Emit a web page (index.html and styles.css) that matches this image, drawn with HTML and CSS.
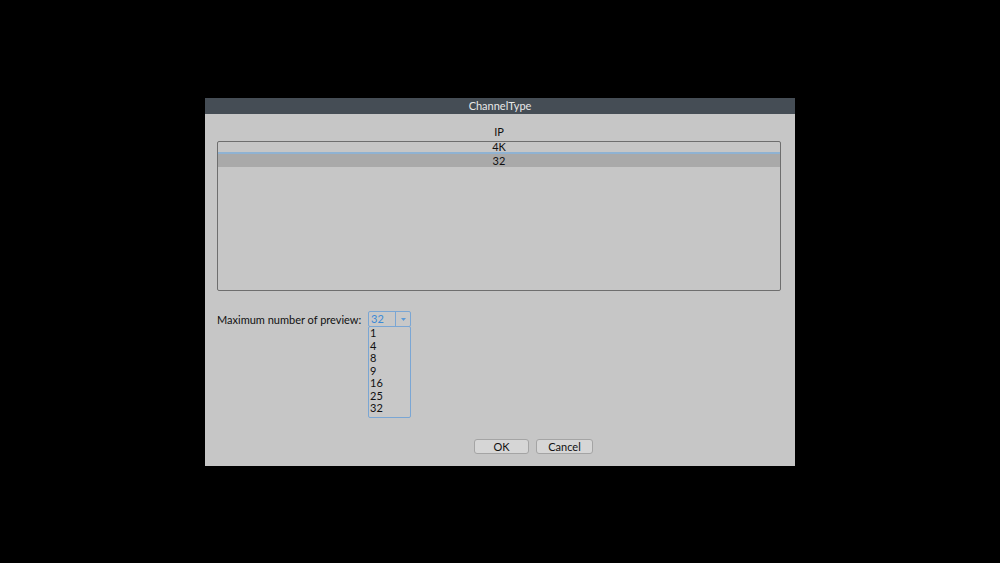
FILE: index.html
```html
<!DOCTYPE html>
<html>
<head>
    <title>ChannelType</title>
    <link rel="stylesheet" href="styles.css">
</head>
<body>
    <div class="dialog">
        <div class="title-bar">ChannelType</div>
        <div class="dialog-body">
            <div class="list-caption">IP</div>
            <div class="listbox">
                <div class="list-row">4K</div>
                <div class="list-row selected">32</div>
            </div>

            <div class="form-row">
                <span class="field-label">Maximum number of preview:</span>
                <div class="combo">
                    <div class="combo-box">
                        <span class="combo-value">32</span>
                        <span class="combo-arrow">
                            <svg width="7" height="5" viewBox="0 0 7 5"><path d="M1 1h5L3.5 4z" fill="#5a9ad8"/></svg>
                        </span>
                    </div>
                    <ul class="combo-list">
                        <li>1</li>
                        <li>4</li>
                        <li>8</li>
                        <li>9</li>
                        <li>16</li>
                        <li>25</li>
                        <li>32</li>
                    </ul>
                </div>
            </div>

            <div class="buttons">
                <button class="btn">OK</button>
                <button class="btn">Cancel</button>
            </div>
        </div>
    </div>
</body>
</html>
```

FILE: styles.css
```css
body {
    margin: 0;
    height: 100vh;
    background-color: #000;
    display: flex;
    justify-content: center;
    align-items: center;
    font-family: Lato, "Noto Sans", sans-serif;
    font-size: 11px;
    color: #111;
}
.dialog {
    width: 590px;
    height: 368px;
    margin-top: 1px;
    background-color: #c6c6c6;
    display: flex;
    flex-direction: column;
}
.title-bar {
    height: 16px;
    line-height: 16px;
    background-color: #454d55;
    color: #e8e8e8;
    text-align: center;
}
.dialog-body {
    flex: 1;
    padding: 0 14px 0 12px;
    display: flex;
    flex-direction: column;
}
.list-caption {
    margin-top: 11px;
    height: 14px;
    line-height: 14px;
    text-align: center;
}
.listbox {
    margin-top: 2px;
    height: 148px;
    border: 1px solid #6e6e6e;
    border-radius: 2px;
}
.list-row {
    height: 12px;
    line-height: 12px;
    text-align: center;
}
.list-row:first-child {
    height: 10px;
    line-height: 10px;
    border-bottom: 2px solid #8fb2d2;
}
.list-row.selected {
    height: 13px;
    line-height: 13px;
    background-color: #a9a9a9;
}
.form-row {
    margin-top: 20px;
    display: flex;
    align-items: center;
    height: 16px;
}
.field-label {
    width: 151px;
}
.combo {
    position: relative;
}
.combo-box {
    width: 41px;
    height: 14px;
    border: 1px solid #7aa6d4;
    border-radius: 2px;
    display: flex;
    background-color: #c8c8c8;
}
.combo-value {
    flex: 1;
    padding-left: 2px;
    line-height: 14px;
    color: #3c8ad6;
}
.combo-arrow {
    width: 14px;
    border-left: 1px solid #7aa6d4;
    display: flex;
    align-items: center;
    justify-content: center;
}
.combo-list {
    position: absolute;
    top: 15px;
    left: 0;
    width: 41px;
    margin: 0;
    padding: 0 0 2px 0;
    list-style: none;
    border: 1px solid #7aa6d4;
    border-radius: 2px;
    background-color: #c8c8c8;
}
.combo-list li {
    height: 12.5px;
    line-height: 12.5px;
    padding-left: 1px;
}
.buttons {
    margin-top: 112px;
    display: flex;
    gap: 7px;
    padding-left: 257px;
}
.btn {
    height: 15px;
    padding: 0;
    font-family: inherit;
    font-size: 11px;
    line-height: 13px;
    color: #111;
    background-color: #d6d6d6;
    border: 1px solid #a4a4a4;
    border-radius: 3px;
}
.btn:first-child {
    width: 55px;
}
.btn:last-child {
    width: 57px;
}
```
